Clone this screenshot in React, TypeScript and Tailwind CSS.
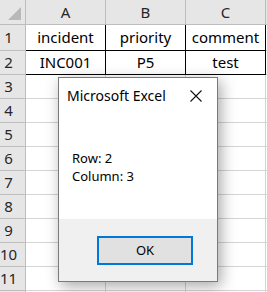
import React from "react";

const cols = ["A", "B", "C"];
const data: Record<number, string[]> = {
  1: ["incident", "priority", "comment"],
  2: ["INC001", "P5", "test"],
};

export default function App() {
  const rows = Array.from({ length: 11 }, (_, i) => i + 1);
  return (
    <div
      className="relative w-[267px] h-[292px] overflow-hidden bg-white text-black"
      style={{ fontFamily: '"Noto Sans", sans-serif' }}
    >
      <div className="grid grid-cols-[26px_80px_80px_80px_20px]">
        {/* header row */}
        <div className="relative h-[25px] bg-[#e6e6e6] border-r border-b border-[#bdbdbd]">
          <svg className="absolute left-0 top-0" width="25" height="24" viewBox="0 0 25 24">
            <polygon points="21,7 21,20 8,20" fill="#b8b8b8" />
          </svg>
        </div>
        {cols.map((c) => (
          <div
            key={c}
            className="h-[25px] bg-[#e6e6e6] border-r border-b border-[#bdbdbd] flex items-center justify-center text-[15px] text-[#262626] leading-none"
          >
            {c}
          </div>
        ))}
        <div className="h-[25px] bg-[#e6e6e6] border-b border-[#bdbdbd]" />
        {rows.map((r) => {
          const h = r === 1 ? "h-[26px]" : "h-[24px]";
          const black = r <= 2;
          return (
            <React.Fragment key={r}>
              <div
                className={`${h} bg-[#e6e6e6] border-r border-b border-[#bdbdbd] flex items-center justify-center pr-[8px] text-[15px] text-[#262626] leading-none`}
              >
                {r}
              </div>
              {cols.map((c, ci) => (
                <div
                  key={c}
                  className={`${h} border-r border-b ${
                    black ? "border-black" : "border-[#d4d4d4]"
                  } flex items-center justify-center text-[15px] leading-none`}
                >
                  {data[r] ? data[r][ci] : ""}
                </div>
              ))}
              <div className={`${h} border-b border-[#d4d4d4]`} />
            </React.Fragment>
          );
        })}
        {/* partially visible row 12 */}
        <div className="h-[24px] bg-[#e6e6e6] border-r border-[#bdbdbd]" />
        <div className="h-[24px] border-r border-[#d4d4d4]" />
        <div className="h-[24px] border-r border-[#d4d4d4]" />
        <div className="h-[24px] border-r border-[#d4d4d4]" />
        <div className="h-[24px]" />
      </div>

      {/* Dialog */}
      <div className="absolute left-[58px] top-[77px] w-[160px] h-[205px] border border-[#7a7a7a] bg-white shadow-[3px_4px_14px_rgba(0,0,0,0.35)] flex flex-col">
        <div className="flex-1 flex flex-col">
          <div className="flex items-start justify-between pl-[8px] pr-[15px] pt-[8px]">
            <span className="text-[14px] leading-[20px] text-black">Microsoft Excel</span>
            <svg className="mt-[4px]" width="12" height="12" viewBox="0 0 12 12">
              <path d="M0.5 0.5 L11.5 11.5 M11.5 0.5 L0.5 11.5" stroke="#111" strokeWidth="1.1" fill="none" />
            </svg>
          </div>
          <div className="pl-[13px] mt-[43px] text-[13px] leading-[18px] text-black">
            <div>Row: 2</div>
            <div>Column: 3</div>
          </div>
        </div>
        <div className="h-[62px] bg-[#f0f0f0] pl-[38px] pt-[17px]">
          <div className="w-[96px] h-[29px] border-2 border-[#0078d7] bg-[#e1e1e1] flex items-center justify-center text-[13px] text-black">
            OK
          </div>
        </div>
      </div>
    </div>
  );
}
